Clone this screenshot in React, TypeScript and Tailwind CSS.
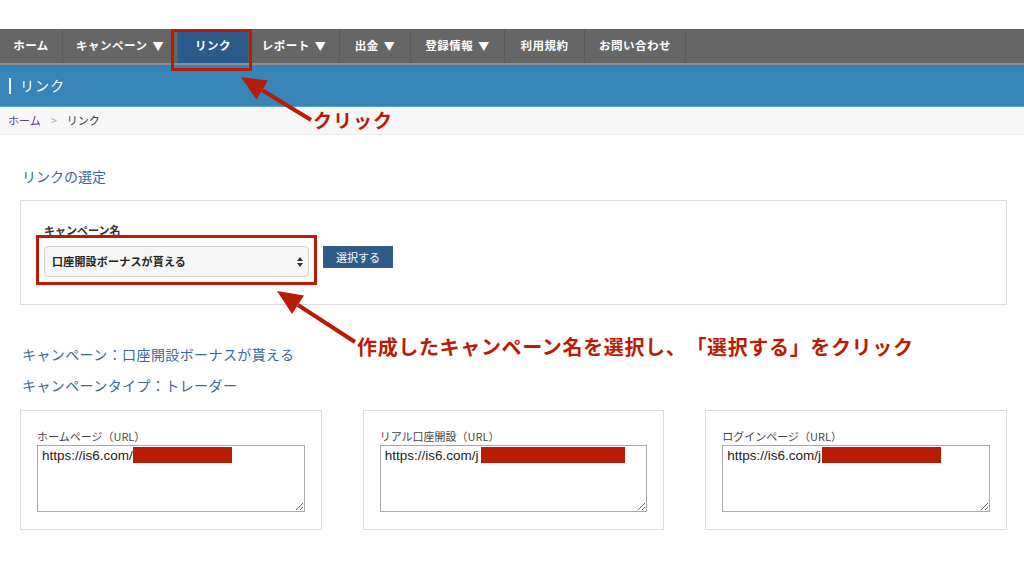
import React from 'react';

const JP = { fontFamily: '"Noto Sans CJK JP", "Noto Sans", sans-serif' };

const navItems = [
  { label: 'ホーム', cls: 'w-[63px]' },
  { label: 'キャンペーン', cls: 'w-[115px]', caret: true },
  { label: 'リンク', cls: 'w-[71px]', active: true },
  { label: 'レポート', cls: 'w-[91px]', caret: true },
  { label: '出金', cls: 'w-[71px]', caret: true },
  { label: '登録情報', cls: 'w-[94px]', caret: true },
  { label: '利用規約', cls: 'w-[80px]' },
  { label: 'お問い合わせ', cls: 'w-[101px]' },
];

const urlBoxes = [
  { label: 'ホームページ（URL）', value: 'https://is6.com/', redact: 'left-[96px] w-[99px]' },
  { label: 'リアル口座開設（URL）', value: 'https://is6.com/j', redact: 'left-[101px] w-[144px]' },
  { label: 'ログインページ（URL）', value: 'https://is6.com/j', redact: 'left-[100px] w-[119px]' },
];

function UrlBox({ label, value, redact }: { label: string; value: string; redact: string }) {
  return (
    <div className="border border-[#dcdcdc] px-[16px] pt-[18px] pb-[17px]">
      <div className="text-[11px] leading-[14px] text-[#444] mb-[2px]">{label}</div>
      <div className="relative">
        <textarea
          readOnly
          defaultValue={value}
          className="block w-full h-[67px] border border-[#a9a9a9] bg-white px-[4px] pt-[1px] text-[13.5px] leading-[18px] text-[#222] resize-y outline-none"
          style={{ fontFamily: '"Liberation Sans", Arial, sans-serif' }}
        />
        <div className={`absolute top-[2px] h-[16px] bg-[#b81c05] ${redact}`} />
      </div>
    </div>
  );
}

export default function App() {
  return (
    <div className="relative w-[1024px] h-[582px] overflow-hidden bg-white [text-spacing-trim:space-all]" style={JP}>
      <div className="h-[29px]" />

      <nav className="flex h-[36px] bg-[#666666] border-b-2 border-[#8e8e8e]">
        {navItems.map((item) => (
          <div
            key={item.label}
            className={`flex items-center justify-center border-r border-[#5b5b5b] text-[11.5px] font-bold tracking-[0.5px] text-white ${item.cls} ${
              item.active ? 'bg-[#2b5a8b]' : ''
            }`}
          >
            {item.label}
            {item.caret && <span className="ml-[5px] text-[11px]">▼</span>}
          </div>
        ))}
      </nav>

      <div className="flex h-[42px] items-center bg-[#3784b9] border-b border-[#5d9ecb] pl-[9px]">
        <span className="mr-[9px] h-[16px] w-[2px] bg-white" />
        <span className="text-[14px] tracking-[1px] text-white">リンク</span>
      </div>

      <div className="flex h-[28px] items-center bg-[#f7f7f7] border-b border-[#ededed] pl-[8px] text-[11px]">
        <span className="text-[#5b3d8d]">ホーム</span>
        <span className="mx-[10px] text-[#aaa]">&gt;</span>
        <span className="text-[#333]">リンク</span>
      </div>

      <main className="pl-[20px] pr-[17px]">
        <h2 className="mt-[31px] pl-[2px] text-[14px] leading-[20px] font-normal text-[#3a6898]">リンクの選定</h2>

        <div className="mt-[14px] h-[105px] border border-[#dcdcdc] pl-[23px] pt-[22px]">
          <div className="text-[11px] leading-[14px] font-bold text-[#333]">キャンペーン名</div>
          <div className="mt-[9px] flex items-start gap-[14px]">
            <div className="flex h-[31px] w-[265px] items-center justify-between rounded-[4px] border border-[#cfcfcf] bg-[#f6f6f6] pl-[7px] pr-[5px]">
              <span className="text-[11px] font-bold tracking-[0.2px] text-[#222]">口座開設ボーナスが貰える</span>
              <svg width="6" height="10" viewBox="0 0 6 10">
                <path d="M3 0 L6 4 L0 4 Z M0 6 L6 6 L3 10 Z" fill="#333" />
              </svg>
            </div>
            <button className="h-[22px] w-[70px] bg-[#2f5b8b] text-[11px] text-white">選択する</button>
          </div>
        </div>

        <p className="mt-[39px] pl-[2px] text-[14px] leading-[20px] tracking-[0.4px] text-[#3a6898]">
          キャンペーン：口座開設ボーナスが貰える
        </p>
        <p className="mt-[11px] pl-[2px] text-[14px] leading-[20px] tracking-[0.4px] text-[#3a6898]">
          キャンペーンタイプ：トレーダー
        </p>

        <div className="mt-[15px] grid grid-cols-3 gap-[41px]">
          {urlBoxes.map((b) => (
            <UrlBox key={b.label} {...b} />
          ))}
        </div>
      </main>

      {/* annotations */}
      <div className="absolute left-[171px] top-[29px] h-[42px] w-[81px] border-[3px] border-[#b81c05]" />
      <div className="absolute left-[36px] top-[235px] h-[50px] w-[281px] border-[3px] border-[#b81c05]" />

      <svg className="absolute left-0 top-0" width="1024" height="582">
        <line x1="262" y1="90" x2="311" y2="120" stroke="#b81c05" strokeWidth="4" />
        <polygon points="241,77 268,80.5 256.5,99.5" fill="#b81c05" />
        <line x1="298" y1="305" x2="355" y2="342" stroke="#b81c05" strokeWidth="4" />
        <polygon points="277,291 304,295.5 292,314" fill="#b81c05" />
      </svg>

      <div className="absolute left-[313px] top-[107px] text-[19px] leading-[26px] font-bold tracking-[1px] text-[#b81c05]">
        クリック
      </div>
      <div className="absolute left-[357px] top-[334px] text-[20px] leading-[26px] font-bold tracking-[0.65px] text-[#b81c05]">
        作成したキャンペーン名を選択し、「選択する」をクリック
      </div>
    </div>
  );
}
